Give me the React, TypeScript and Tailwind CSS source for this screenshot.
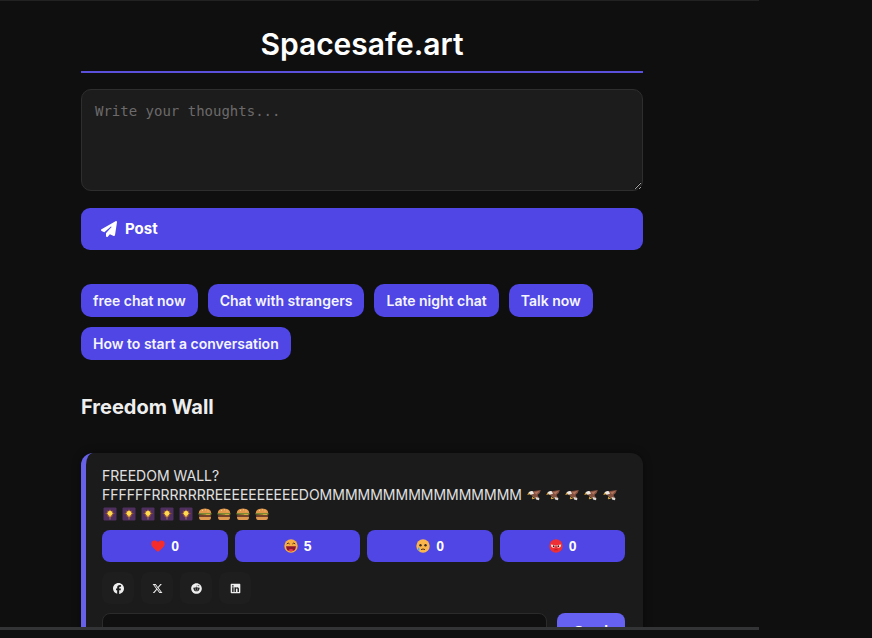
import React, { useState } from "react";
import { FaReddit } from "react-icons/fa";
import { FaPaperPlane, FaFacebook, FaLinkedin, FaXTwitter } from "react-icons/fa6";

const topics = [
  "free chat now",
  "Chat with strangers",
  "Late night chat",
  "Talk now",
  "How to start a conversation",
];

const shareLinks = [
  { label: "Facebook", Icon: FaFacebook },
  { label: "X", Icon: FaXTwitter },
  { label: "Reddit", Icon: FaReddit },
  { label: "LinkedIn", Icon: FaLinkedin },
];

function Emoji({ label, children }: { label: string; children: React.ReactNode }) {
  return (
    <svg viewBox="-1 0 15 14" role="img" aria-label={label} className="inline-block h-3.5 w-[15px] align-[-2px]">
      {children}
    </svg>
  );
}

function Eagle() {
  return (
    <Emoji label="eagle">
      <path d="M3.5 4.5 L7 3 L13.8 2 Q13.5 5 10.5 7 L12 10 L9 10.5 L6 8.5 L4 7Z" fill="#84503f" />
      <path d="M7 4.5 L12.5 2.8 L9.5 6.5 Z" fill="#b0735c" />
      <path d="M5.8 3.2 Q3 2.3 1.3 5 L3.5 6.8 L7 5.8 Z" fill="#ece8e4" />
      <path d="M1.8 4.4 L0.1 6.7 L2.8 6.4Z" fill="#f2b134" />
      <path d="M8.5 9 L12.4 10 L12 12.2 L9 11.4Z" fill="#ddd7d3" />
      <path d="M6 8.5 L5.3 10.8 L7.8 10" stroke="#e8b04a" strokeWidth="1" fill="none" />
    </Emoji>
  );
}

function Sparkler() {
  return (
    <Emoji label="sparkler">
      <rect x="0.5" y="0.5" width="13" height="13" rx="1" fill="#4f2f5f" />
      <path d="M7 7 L7 12.5" stroke="#a77a58" strokeWidth="1" />
      <path
        d="M7 2 L8 4 L10.3 3.5 L9.9 5.6 L12 6.6 L9.9 7.6 L9.4 9.6 L7 11 L4.6 9.6 L4.1 7.6 L2 6.6 L4.1 5.6 L3.7 3.5 L6 4Z"
        fill="#8d5345"
      />
      <path d="M7 3.2 L9.8 6.2 L7 10.2 L4.2 6.2Z" fill="#f5b93c" />
      <circle cx="7" cy="6.3" r="2.3" fill="#ffdc4e" />
    </Emoji>
  );
}

function Burger() {
  return (
    <Emoji label="hamburger">
      <path d="M0.8 6 Q1 1.5 7 1.5 Q13 1.5 13.2 6Z" fill="#e2984a" />
      <path d="M0.5 6 H13.5 V7.5 H0.5Z" fill="#7d8a34" />
      <path d="M1 7.2 H13 L10 9 L8 7.8Z" fill="#f6c945" />
      <rect x="0.8" y="8" width="12.4" height="2" rx="1" fill="#73402b" />
      <path d="M1 10 H13 Q13 13 11 13 H3 Q1 13 1 10Z" fill="#dd9850" />
      <path d="M4 3.5 h1 M7 2.8 h1 M9.5 4 h1" stroke="#ffe0a3" strokeWidth="0.7" />
    </Emoji>
  );
}

function Heart() {
  return (
    <Emoji label="love">
      <path d="M7 13 C4 10.5 0.3 8 0.3 4.8 C0.3 1.2 5 0.5 7 3.4 C9 0.5 13.7 1.2 13.7 4.8 C13.7 8 10 10.5 7 13Z" fill="#f52c2c" />
    </Emoji>
  );
}

function Laugh() {
  return (
    <Emoji label="funny">
      <circle cx="7" cy="7" r="6.7" fill="#f9ae43" />
      <path d="M2.8 5 Q4.2 3 5.6 5 M8.4 5 Q9.8 3 11.2 5" stroke="#53321d" strokeWidth="1" fill="none" />
      <path d="M2 7.2 H12 Q11.5 12.4 7 12.4 Q2.5 12.4 2 7.2Z" fill="#8c1732" />
      <path d="M4.3 11.2 Q7 9 9.7 11.2 Q7 13 4.3 11.2Z" fill="#ed3c55" />
    </Emoji>
  );
}

function Sad() {
  return (
    <Emoji label="sad">
      <circle cx="7" cy="7" r="6.7" fill="#fbb54b" />
      <circle cx="4.5" cy="6.3" r="1.2" fill="#3d2a20" />
      <circle cx="9.5" cy="6.3" r="1.2" fill="#3d2a20" />
      <path d="M5 10.6 Q7 9.4 9 10.6" stroke="#53321d" strokeWidth="1" fill="none" />
      <path d="M2.8 8 Q0.8 11 2.3 11.8 Q4.6 12 2.8 8Z" fill="#4aa5e8" />
    </Emoji>
  );
}

function Angry() {
  return (
    <Emoji label="angry">
      <circle cx="7" cy="7" r="6.7" fill="#ee2f35" />
      <path d="M1.8 5.5 L6.6 6.3 Q6.2 9 4 8.8 Q2 8.5 1.8 5.5Z M12.2 5.5 L7.4 6.3 Q7.8 9 10 8.8 Q12 8.5 12.2 5.5Z" fill="#ffe3e0" />
      <circle cx="4.7" cy="7.2" r="0.9" fill="#4a1010" />
      <circle cx="9.3" cy="7.2" r="0.9" fill="#4a1010" />
      <path d="M5.3 11 Q7 10.2 8.7 11" stroke="#a8161e" strokeWidth="0.8" fill="none" />
    </Emoji>
  );
}

function repeat(Icon: React.ComponentType, count: number) {
  return Array.from({ length: count }, (_, i) => (
    <React.Fragment key={i}>
      <Icon />{" "}
    </React.Fragment>
  ));
}

function Post() {
  const [reactions, setReactions] = useState([
    { Icon: Heart, count: 0 },
    { Icon: Laugh, count: 5 },
    { Icon: Sad, count: 0 },
    { Icon: Angry, count: 0 },
  ]);

  const react = (index: number) =>
    setReactions(reactions.map((r, i) => (i === index ? { ...r, count: r.count + 1 } : r)));

  return (
    <article className="rounded-xl border-l-[5px] border-[#6661e8] bg-[#1b1b1b] py-[13px] pr-[18px] pl-4 shadow-[0_0_8px_rgba(0,0,0,0.4)]">
      <p className="text-[14px] leading-[19px] text-[#e0e0e0]">
        FREEDOM WALL?
        <br />
        FFFFFFRRRRRRREEEEEEEEEEDOMMMMMMMMMMMMMMMM {repeat(Eagle, 5)}
        <br />
        {repeat(Sparkler, 5)}
        {repeat(Burger, 4)}
      </p>

      {/* Reactions */}
      <div className="mt-[7px] grid grid-cols-4 gap-[7px]">
        {reactions.map(({ Icon, count }, index) => (
          <button
            key={index}
            type="button"
            onClick={() => react(index)}
            className="flex h-8 items-center justify-center gap-1.5 rounded-lg bg-[#4f46e5] font-['Liberation_Sans',sans-serif] text-[14px] font-bold text-white"
          >
            <Icon />
            {count}
          </button>
        ))}
      </div>

      {/* Share */}
      <div className="mt-2.5 flex gap-[7px]">
        {shareLinks.map(({ label, Icon }) => (
          <a
            key={label}
            href="#"
            aria-label={label}
            className="flex h-8 w-8 items-center justify-center rounded-lg bg-[#1e1e1e] text-[#eeeeee]"
          >
            <Icon className="h-[11px] w-[11px]" />
          </a>
        ))}
      </div>

      {/* Comment */}
      <form className="mt-[9px] flex gap-2.5" onSubmit={(e) => e.preventDefault()}>
        <input
          type="text"
          aria-label="Comment"
          className="h-9 min-w-0 flex-1 rounded-lg border border-[#2b2b2b] bg-[#101010] px-3 text-[14px] text-white"
        />
        <button
          type="submit"
          className="h-9 w-[68px] rounded-lg bg-[#6661f0] font-['Liberation_Sans',sans-serif] text-[14px] font-bold text-white"
        >
          Send
        </button>
      </form>
    </article>
  );
}

export default function App() {
  const [thoughts, setThoughts] = useState("");

  return (
    <div className="flex h-screen flex-col overflow-hidden bg-[#0f0f0f] font-['Inter',sans-serif] text-white">
      <div className="min-h-0 flex-1 overflow-hidden">
        <div className="w-[87%] border-t border-[#222222]" />
        <main className="ml-[81px] max-w-[562px] pt-6">
          <h1 className="border-b-2 border-[#5a50dc] pb-2 text-center text-[30px] leading-[38px] font-semibold">
            Spacesafe.art
          </h1>

          <form onSubmit={(e) => e.preventDefault()}>
            <textarea
              aria-label="Write your thoughts"
              placeholder="Write your thoughts..."
              value={thoughts}
              onChange={(e) => setThoughts(e.target.value)}
              className="mt-4 block h-[102px] w-full resize-y rounded-[10px] border border-[#2e2e2e] bg-[#1c1c1c] px-[13px] py-3 font-['DejaVu_Sans_Mono',monospace] text-[14px] leading-[18px] placeholder:text-[#6c6a6a]"
            />
            <button
              type="submit"
              className="mt-[17px] flex h-[42px] w-full items-center gap-2 rounded-[9px] bg-[#4f46e5] px-5 text-[15px] font-bold"
            >
              <FaPaperPlane className="h-4 w-4" />
              Post
            </button>
          </form>

          <nav className="mt-[34px] flex flex-wrap gap-2.5">
            {topics.map((topic) => (
              <a
                key={topic}
                href="#"
                className="rounded-[10px] bg-[#4f46e5] px-3 py-[7px] text-[14px] leading-[19px] font-semibold text-[#f5f5ff]"
              >
                {topic}
              </a>
            ))}
          </nav>

          <h2 className="mt-[33px] mb-[31px] text-[20px] leading-[29px] font-bold text-[#eeeeee]">Freedom Wall</h2>

          <Post />
        </main>
      </div>
      <div className="h-[3px] w-[87%] shrink-0 bg-[#333435]" />
      <div className="h-2 shrink-0" />
    </div>
  );
}
